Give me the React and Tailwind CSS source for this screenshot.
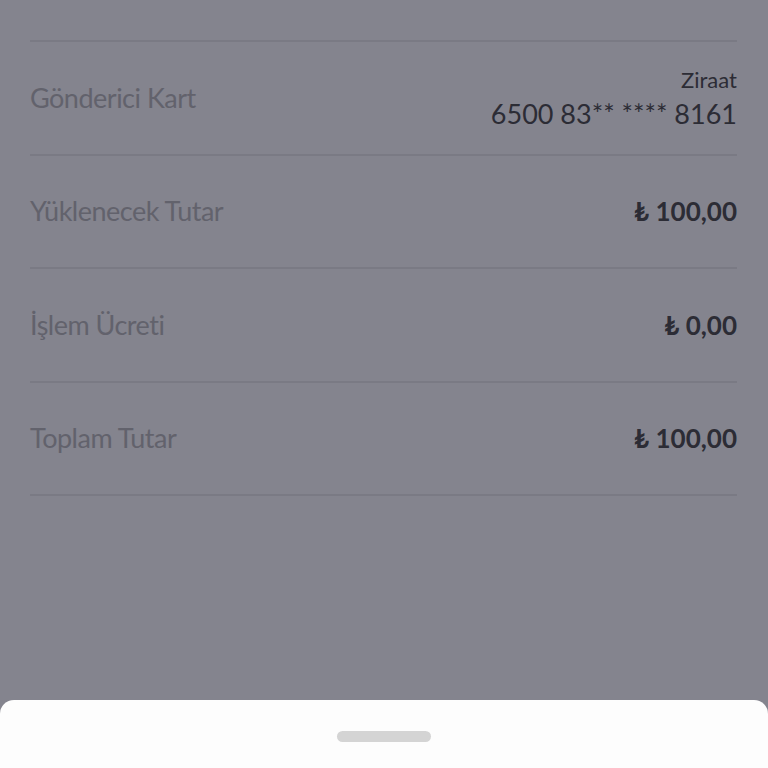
import React from 'react';

const rows = [
  { label: 'Gönderici Kart', card: true, h: 'h-[114px]' },
  { label: 'Yüklenecek Tutar', value: '₺ 100,00', h: 'h-[113px]' },
  { label: 'İşlem Ücreti', value: '₺ 0,00', h: 'h-[114px]' },
  { label: 'Toplam Tutar', value: '₺ 100,00', h: 'h-[115px] border-b-2' },
];

export default function App() {
  return (
    <div className="w-[768px] h-[768px] overflow-hidden bg-[#84848e] flex flex-col font-['Lato','Liberation_Sans',sans-serif]">
      {/* summary list behind the sheet */}
      <div className="flex-1 pt-[40px] pl-[30px] pr-[31px]">
        {rows.map((row) => (
          <div
            key={row.label}
            className={`${row.h} flex items-center justify-between border-t-2 border-[#7a7a84]`}
          >
            <span className="text-[27px] font-normal text-[#62626c] tracking-[-0.5px]">{row.label}</span>
            {row.card ? (
              <div className="flex flex-col items-end text-[#2c2c35] leading-none">
                <span className="text-[22px] font-normal mb-[9px]">Ziraat</span>
                <span className="text-[27px] font-normal">6500 83** **** 8161</span>
              </div>
            ) : (
              <span className="text-[26px] font-bold text-[#2c2c35]">{row.value}</span>
            )}
          </div>
        ))}
      </div>

      {/* bottom sheet */}
      <div className="h-[68px] bg-[#fdfdfd] rounded-t-[14px] flex justify-center pt-[31px]">
        <div className="w-[94px] h-[11px] rounded-full bg-[#d4d4d4]" />
      </div>
    </div>
  );
}
